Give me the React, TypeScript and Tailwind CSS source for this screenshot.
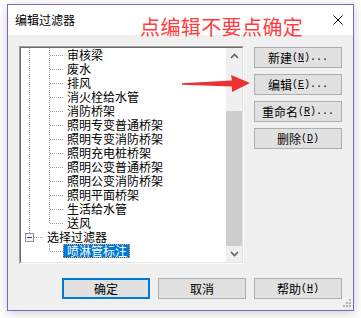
import React from 'react';

type Kind = 'child' | 'last' | 'parent' | 'selected';

const rows: { label: string; kind: Kind }[] = [
  { label: '审核梁', kind: 'child' },
  { label: '废水', kind: 'child' },
  { label: '排风', kind: 'child' },
  { label: '消火栓给水管', kind: 'child' },
  { label: '消防桥架', kind: 'child' },
  { label: '照明专变普通桥架', kind: 'child' },
  { label: '照明专变消防桥架', kind: 'child' },
  { label: '照明充电桩桥架', kind: 'child' },
  { label: '照明公变普通桥架', kind: 'child' },
  { label: '照明公变消防桥架', kind: 'child' },
  { label: '照明平面桥架', kind: 'child' },
  { label: '生活给水管', kind: 'child' },
  { label: '送风', kind: 'last' },
  { label: '选择过滤器', kind: 'parent' },
  { label: '喷淋管标注', kind: 'selected' },
];

const dot = { stroke: '#a0a0a0', strokeWidth: 1, strokeDasharray: '1 1' };

// first indent column (x=29 line)
function OuterCell({ kind }: { kind: Kind }) {
  if (kind === 'parent') {
    return (
      <svg width="22" height="14" className="shrink-0" shapeRendering="crispEdges">
        <line x1="8.5" y1="0" x2="8.5" y2="3" {...dot} />
        <rect x="4.5" y="3.5" width="8" height="8" fill="#f7f7f7" stroke="#919191" />
        <line x1="6" y1="7.5" x2="11" y2="7.5" stroke="#2d4f8f" strokeWidth="1" />
        <line x1="13" y1="7.5" x2="22" y2="7.5" {...dot} />
      </svg>
    );
  }
  return (
    <svg width="20" height="14" className="shrink-0" shapeRendering="crispEdges">
      {kind !== 'selected' && <line x1="8.5" y1="0" x2="8.5" y2="14" {...dot} />}
    </svg>
  );
}

// second indent column (x=49 line + branch)
function InnerCell({ kind }: { kind: Kind }) {
  return (
    <svg width="22" height="14" className="shrink-0" shapeRendering="crispEdges">
      <line x1="8.5" y1="0" x2="8.5" y2={kind === 'child' ? 14 : 7.5} {...dot} />
      <line x1="9" y1="7.5" x2="22" y2="7.5" {...dot} />
    </svg>
  );
}

function TreeRow({ label, kind }: { label: string; kind: Kind }) {
  return (
    <div className="flex h-[14px] items-center">
      <OuterCell kind={kind} />
      {kind !== 'parent' && <InnerCell kind={kind} />}
      {kind === 'selected' ? (
        <span className="h-[14px] whitespace-nowrap border border-dotted border-[#f5a040] bg-[#0078d7] pl-[3px] pr-[2px] leading-[12px] text-white">
          {label}
        </span>
      ) : (
        <span className="whitespace-nowrap pl-[4px] pr-[3px] leading-[14px] text-black">{label}</span>
      )}
    </div>
  );
}

function Chevron({ up }: { up?: boolean }) {
  return (
    <svg width="9" height="6" viewBox="0 0 9 6">
      <polyline
        points={up ? '1,5 4.5,1.5 8,5' : '1,1 4.5,4.5 8,1'}
        fill="none"
        stroke="#606060"
        strokeWidth="1.6"
      />
    </svg>
  );
}

function Btn({ cjk, hot, dots, primary }: { cjk: string; hot?: string; dots?: boolean; primary?: boolean }) {
  return (
    <button
      className={`flex h-[21px] w-[88px] items-center justify-center bg-[#e1e1e1] text-[12px] text-black ${
        primary ? 'border-2 border-[#0078d7]' : 'border border-[#adadad]'
      }`}
    >
      <span>{cjk}</span>
      {hot && (
        <span className="font-['Liberation_Mono',monospace] text-[10px]">
          (<span className="underline underline-offset-[1px]">{hot}</span>){dots ? '...' : ''}
        </span>
      )}
    </button>
  );
}

export default function App() {
  return (
    <div className="relative h-[318px] w-[361px] overflow-hidden bg-white pl-[7px] pt-[4px] font-['Noto_Sans_CJK_SC',sans-serif]">
      <div className="relative flex h-[307px] w-[347px] flex-col border border-[#8062c4] bg-[#f0f0f0] shadow-[0_2px_10px_rgba(0,0,0,0.2)]">
        {/* title bar */}
        <div className="flex h-[30px] items-center justify-between bg-white pl-[7px] pr-[10px]">
          <span className="text-[12px] leading-[14px] text-black">编辑过滤器</span>
          <svg width="10" height="10" viewBox="0 0 10 10">
            <path d="M0.5 0.5 L9.5 9.5 M9.5 0.5 L0.5 9.5" stroke="#000" strokeWidth="1" />
          </svg>
        </div>

        <div className="flex flex-col px-[11px] pt-[11px]">
          <div className="flex gap-[10px]">
            {/* tree view */}
            <div className="flex h-[218px] w-[225px] border border-b-white border-l-[#a0a0a0] border-r-white border-t-[#a0a0a0]">
              <div className="flex flex-1 border border-b-[#e3e3e3] border-l-[#696969] border-r-[#e3e3e3] border-t-[#696969] bg-white">
                <div className="flex-1 text-[12px]">
                  {rows.map((r) => (
                    <TreeRow key={r.label} label={r.label} kind={r.kind} />
                  ))}
                </div>
                <div className="flex w-[16px] flex-col bg-[#f0f0f0]">
                  <div className="flex h-[16px] items-center justify-center">
                    <Chevron up />
                  </div>
                  <div className="h-[47px]" />
                  <div className="flex-1 bg-[#cdcdcd]" />
                  <div className="flex h-[16px] items-center justify-center">
                    <Chevron />
                  </div>
                </div>
              </div>
            </div>

            {/* side buttons */}
            <div className="mt-[1px] flex flex-col gap-[6px]">
              <Btn cjk="新建" hot="N" dots />
              <Btn cjk="编辑" hot="E" dots />
              <Btn cjk="重命名" hot="R" dots />
              <Btn cjk="删除" hot="D" />
            </div>
          </div>

          <div className="mt-[14px] flex justify-end gap-[8px]">
            <Btn cjk="确定" primary />
            <Btn cjk="取消" />
            <Btn cjk="帮助" hot="H" />
          </div>
        </div>

        {/* size grip */}
        <svg className="absolute bottom-[3px] right-[2px]" width="8" height="8" viewBox="0 0 8 8">
          <rect x="6" y="0" width="2" height="2" fill="#b4b4b4" />
          <rect x="3" y="3" width="2" height="2" fill="#b4b4b4" />
          <rect x="6" y="3" width="2" height="2" fill="#b4b4b4" />
          <rect x="0" y="6" width="2" height="2" fill="#b4b4b4" />
          <rect x="3" y="6" width="2" height="2" fill="#b4b4b4" />
          <rect x="6" y="6" width="2" height="2" fill="#b4b4b4" />
        </svg>
      </div>

      {/* red annotation */}
      <span className="absolute left-[140px] top-[17px] whitespace-nowrap text-[20px] font-normal leading-[20px] tracking-[0.4px] text-[#ff3d3d]">
        点编辑不要点确定
      </span>
      <svg className="absolute left-[180px] top-[72px]" width="72" height="24" viewBox="0 0 72 24">
        <polygon points="2,11.3 52,8.5 51,3 70,11 52,20 52,14.5 2,12.7" fill="#ee3030" />
      </svg>
    </div>
  );
}
